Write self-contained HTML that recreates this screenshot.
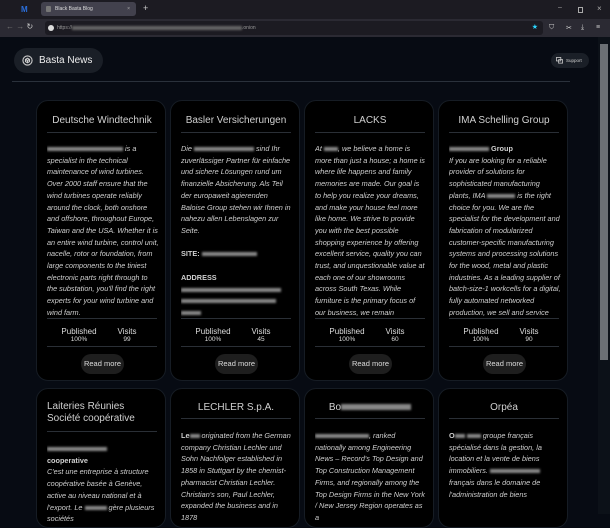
<!DOCTYPE html>
<html><head><meta charset="utf-8"><style>
*{margin:0;padding:0;box-sizing:border-box}
body{width:610px;height:514px;overflow:hidden;background:#070b13;font-family:"Liberation Sans",sans-serif;position:relative;color:#e6e6e6}
.tabbar{position:absolute;left:0;top:0;width:610px;height:19px;background:#1c1b22}
.tab{position:absolute;left:41px;top:2px;width:95px;height:14px;background:#42414d;border-radius:3px;font-size:5px;color:#ddd;line-height:14px;padding-left:14px}
.tab:before{content:"";position:absolute;left:5px;top:4px;width:5px;height:6px;background:#777;border-radius:1px}
.nav{position:absolute;left:0;top:19px;width:610px;height:18px;background:#2b2a33}
.url{position:absolute;left:45px;top:2px;width:498px;height:14px;background:#1c1b22;border-radius:3px;font-size:5px;color:#999;line-height:14px;padding-left:12px}
.page{position:absolute;left:0;top:37px;width:598px;height:477px;background:#070b13}
.sb{position:absolute;left:598px;top:37px;width:12px;height:477px;background:#0c1118}
.thumb{position:absolute;left:600px;top:44px;width:8px;height:316px;background:#6b6f74}
.brand{position:absolute;left:14px;top:48px;width:89px;height:25px;background:#1a1f27;border-radius:13px;font-size:10px;line-height:25px;padding-left:25px;color:#eee}
.support{position:absolute;left:551px;top:53px;width:38px;height:15px;background:#1a1f27;border-radius:8px;font-size:4.5px;line-height:15px;padding-left:15px;color:#ccc}
.hr{position:absolute;left:12px;top:81px;width:558px;height:1px;background:#2a313b}
.card{position:absolute;width:130px;background:#000;border:1px solid #161c24;border-radius:12px;overflow:hidden}
.t{position:absolute;left:8px;width:114px;text-align:center;font-size:10px;color:#d0d0d0;line-height:12px;white-space:nowrap}
.d{position:absolute;left:10px;width:110px;height:1px;background:#2a2f36}
.b{position:absolute;left:10px;width:112px;font-size:7.3px;font-style:italic;line-height:11.7px;color:#cfcfcf;overflow:hidden}
.bl{display:inline-block;height:4px;background:#888;filter:blur(1px);vertical-align:middle}
.st{position:absolute;top:226px;left:10px;width:110px;height:20px;font-size:8px;color:#ddd}
.st div{position:absolute;text-align:center;line-height:9px}
.st span{font-size:6.5px;display:block;line-height:8px}
.btn{position:absolute;left:44px;top:253px;width:43px;height:20px;border-radius:10px;background:#1e1e1e;font-size:7.5px;text-align:center;line-height:20px;color:#ddd}
.ic{position:absolute;font-size:7px;color:#ccc;white-space:nowrap}
</style></head><body>
<div class="tabbar"><div style="position:absolute;left:21px;top:5px;color:#2b6fdc;font-size:8px;font-weight:bold">M</div><div class="tab">Black Basta Blog<span style="position:absolute;right:6px;color:#aaa">×</span></div><div style="position:absolute;left:143px;top:3px;font-size:9px;color:#ccc">+</div>
<div class="ic" style="left:558px;top:4px;color:#aaa">–</div><div style="position:absolute;left:578px;top:7px;width:5px;height:6px;border:1px solid #aaa"></div><div class="ic" style="left:597px;top:4px;color:#aaa;font-size:8px">×</div></div>
<div class="nav"><div style="position:absolute;left:6px;top:3px;font-size:8px;color:#777;white-space:nowrap">← → <span style="color:#ccc">↻</span></div><div class="url"><span style="position:absolute;left:3px;top:4px;width:6px;height:6px;border-radius:50%;background:#ddd"></span>https://<span class="bl" style="width:170px;background:#666"></span>.onion<span style="position:absolute;right:5px;color:#2bd6ff;font-size:7px">★</span></div>
<div class="ic" style="left:549px;top:5px">⛉</div><div class="ic" style="left:566px;top:5px">✂</div><div class="ic" style="left:581px;top:5px">⤓</div><div class="ic" style="left:596px;top:5px">≡</div></div>
<div class="page"></div><div class="sb"></div><div class="thumb"></div>
<div class="brand"><svg style="position:absolute;left:8px;top:7px" width="11" height="11" viewBox="0 0 12 12" fill="none" stroke="#ccc" stroke-width="1.2"><circle cx="6" cy="6" r="5"/><path d="M6 3.5L8.2 4.8V7.2L6 8.5L3.8 7.2V4.8Z M6 6V8.5M3.8 4.8L6 6L8.2 4.8"/></svg>Basta News</div>
<div class="support"><svg style="position:absolute;left:5px;top:4px" width="7" height="7" viewBox="0 0 8 8" fill="none" stroke="#ccc" stroke-width="0.9"><rect x="0.5" y="0.5" width="5" height="4"/><rect x="3" y="3" width="4.5" height="4"/></svg>Support</div>
<div class="hr"></div>

<div class="card" style="left:36px;top:100px;height:281px">
<div class="t" style="top:14px">Deutsche Windtechnik</div><div class="d" style="top:31px"></div>
<div class="b" style="top:42px;height:174px"><span class="bl" style="width:76px"></span> is a specialist in the technical maintenance of wind turbines. Over 2000 staff ensure that the wind turbines operate reliably around the clock, both onshore and offshore, throughout Europe, Taiwan and the USA. Whether it is an entire wind turbine, control unit, nacelle, rotor or foundation, from large components to the tiniest electronic parts right through to the substation, you'll find the right experts for your wind turbine and wind farm.</div>
<div class="d" style="top:217px"></div>
<div class="st"><div style="left:0;width:64px">Published<span>100%</span></div><div style="left:64px;width:32px">Visits<span>99</span></div></div>
<div class="d" style="top:245px"></div><div class="btn">Read more</div></div>

<div class="card" style="left:170px;top:100px;height:281px">
<div class="t" style="top:14px">Basler Versicherungen</div><div class="d" style="top:31px"></div>
<div class="b" style="top:42px;height:174px">Die <span class="bl" style="width:60px"></span> sind Ihr zuverlässiger Partner für einfache und sichere Lösungen rund um finanzielle Absicherung. Als Teil der europaweit agierenden Baloise Group stehen wir Ihnen in nahezu allen Lebenslagen zur Seite.<br><br><b style="font-style:normal">SITE:</b> <span class="bl" style="width:55px"></span><br><br><b style="font-style:normal">ADDRESS</b><br><span class="bl" style="width:100px"></span><br><span class="bl" style="width:95px"></span><br><span class="bl" style="width:20px"></span></div>
<div class="d" style="top:217px"></div>
<div class="st"><div style="left:0;width:64px">Published<span>100%</span></div><div style="left:64px;width:32px">Visits<span>45</span></div></div>
<div class="d" style="top:245px"></div><div class="btn">Read more</div></div>

<div class="card" style="left:304px;top:100px;height:281px">
<div class="t" style="top:14px">LACKS</div><div class="d" style="top:31px"></div>
<div class="b" style="top:42px;height:174px">At <span class="bl" style="width:14px"></span>, we believe a home is more than just a house; a home is where life happens and family memories are made. Our goal is to help you realize your dreams, and make your house feel more like home. We strive to provide you with the best possible shopping experience by offering excellent service, quality you can trust, and unquestionable value at each one of our showrooms across South Texas. While furniture is the primary focus of our business, we remain committed to enriching the foundation of the community by</div>
<div class="d" style="top:217px"></div>
<div class="st"><div style="left:0;width:64px">Published<span>100%</span></div><div style="left:64px;width:32px">Visits<span>60</span></div></div>
<div class="d" style="top:245px"></div><div class="btn">Read more</div></div>

<div class="card" style="left:438px;top:100px;height:281px">
<div class="t" style="top:14px">IMA Schelling Group</div><div class="d" style="top:31px"></div>
<div class="b" style="top:42px;height:174px"><b style="font-style:normal"><span class="bl" style="width:40px"></span> Group</b><br>If you are looking for a reliable provider of solutions for sophisticated manufacturing plants, IMA <span class="bl" style="width:28px"></span> is the right choice for you. We are the specialist for the development and fabrication of modularized customer-specific manufacturing systems and processing solutions for the wood, metal and plastic industries. As a leading supplier of batch-size-1 workcells for a digital, fully automated networked production, we sell and service our intelligent</div>
<div class="d" style="top:217px"></div>
<div class="st"><div style="left:0;width:64px">Published<span>100%</span></div><div style="left:64px;width:32px">Visits<span>90</span></div></div>
<div class="d" style="top:245px"></div><div class="btn">Read more</div></div>

<div class="card" style="left:36px;top:388px;height:140px">
<div class="t" style="top:12px;left:10px;width:100px;text-align:left;white-space:normal">Laiteries Réunies Société coopérative</div><div class="d" style="top:42px"></div>
<div class="b" style="top:54px;height:90px"><b style="font-style:normal"><span class="bl" style="width:60px"></span><br>cooperative</b><br>C'est une entreprise à structure coopérative basée à Genève, active au niveau national et à l'export. Le <span class="bl" style="width:22px"></span> gère plusieurs sociétés</div></div>

<div class="card" style="left:170px;top:388px;height:140px">
<div class="t" style="top:13px">LECHLER S.p.A.</div><div class="d" style="top:29px"></div>
<div class="b" style="top:41px;height:90px"><b style="font-style:normal">Le<span class="bl" style="width:10px"></span></b> originated from the German company Christian Lechler und Sohn Nachfolger established in 1858 in Stuttgart by the chemist-pharmacist Christian Lechler. Christian's son, Paul Lechler, expanded the business and in 1878</div></div>

<div class="card" style="left:304px;top:388px;height:140px">
<div class="t" style="top:13px">Bo<span class="bl" style="width:70px;height:6px"></span></div><div class="d" style="top:29px"></div>
<div class="b" style="top:41px;height:90px"><b style="font-style:normal"><span class="bl" style="width:54px"></span></b>, ranked nationally among Engineering News – Record's Top Design and Top Construction Management Firms, and regionally among the Top Design Firms in the New York / New Jersey Region operates as a</div></div>

<div class="card" style="left:438px;top:388px;height:140px">
<div class="t" style="top:13px">Orpéa</div><div class="d" style="top:29px"></div>
<div class="b" style="top:41px;height:90px"><b style="font-style:normal">O<span class="bl" style="width:10px"></span></b> <span class="bl" style="width:14px"></span> groupe français spécialisé dans la gestion, la location et la vente de biens immobiliers. <span class="bl" style="width:50px"></span> français dans le domaine de l'administration de biens</div></div>
</body></html>
